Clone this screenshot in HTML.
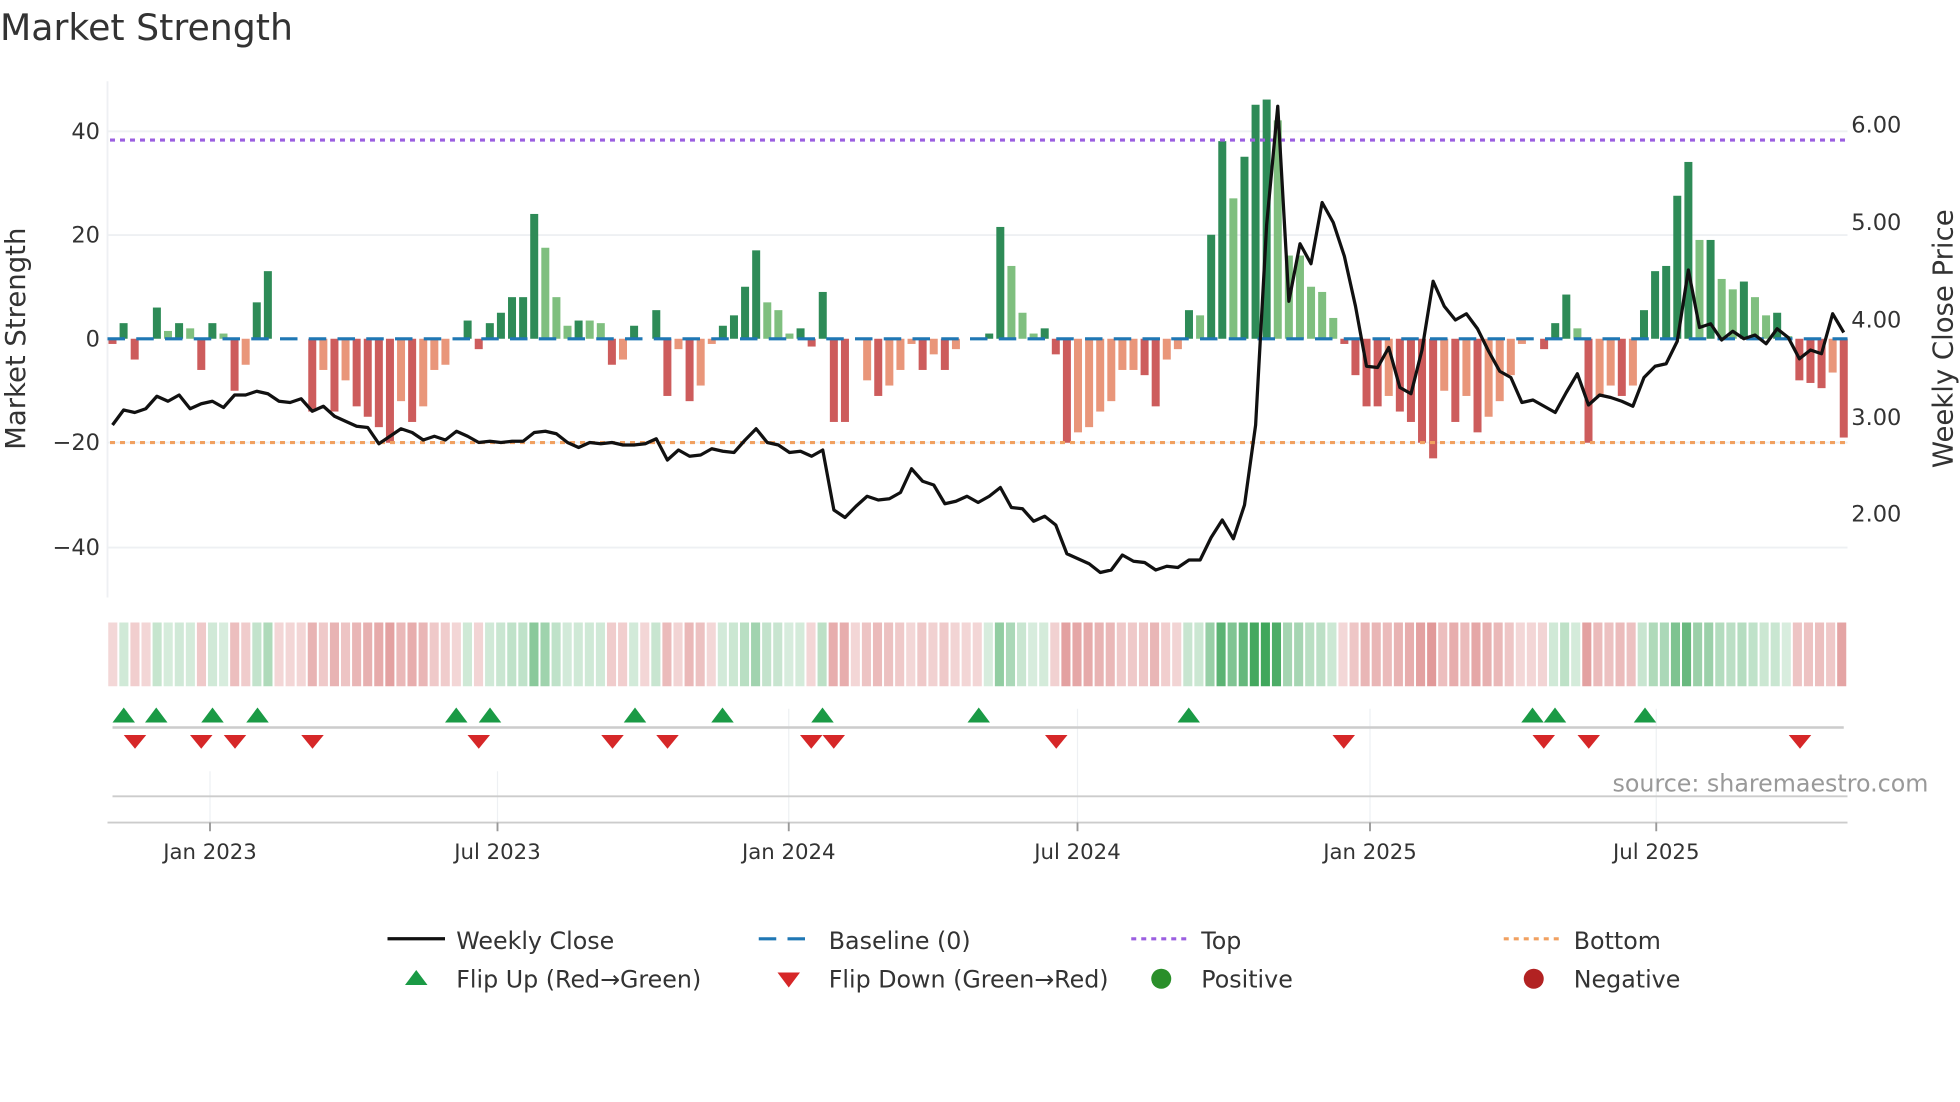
<!DOCTYPE html>
<html><head><meta charset="utf-8"><style>
html,body{margin:0;padding:0;background:#fff;}
svg{display:block;font-family:"DejaVu Sans","Liberation Sans",sans-serif;}
</style></head><body>
<svg id="s" width="1960" height="1102" viewBox="0 0 1568 881.6" xmlns="http://www.w3.org/2000/svg">
<rect width="1568" height="882" fill="#fff"/>
<text x="0" y="32" font-size="29" fill="#333">Market Strength</text>
<g id="grid" stroke="#eef0f3" stroke-width="1.5">
<line x1="86" x2="1478" y1="105" y2="105"/><line x1="86" x2="1478" y1="188" y2="188"/>
<line x1="86" x2="1478" y1="354" y2="354"/><line x1="86" x2="1478" y1="438" y2="438"/>
<line x1="86" x2="86" y1="65" y2="478"/>
</g>
<g font-size="18" fill="#333" text-anchor="end">
<text x="80" y="111">40</text><text x="80" y="194">20</text><text x="80" y="277">0</text>
<text x="80" y="360">−20</text><text x="80" y="444">−40</text>
</g>
<g font-size="18" fill="#333">
<text x="1481" y="106">6.00</text><text x="1481" y="184">5.00</text><text x="1481" y="262">4.00</text>
<text x="1481" y="340">3.00</text><text x="1481" y="417">2.00</text>
</g>
<text transform="translate(20,271) rotate(-90)" font-size="22" fill="#333" text-anchor="middle">Market Strength</text>
<text transform="translate(1562,271) rotate(-90)" font-size="22" fill="#333" text-anchor="middle">Weekly Close Price</text>
<g id="bars"></g>
<line x1="86" x2="1478" y1="271" y2="271" stroke="#1f77b4" stroke-width="2.5" stroke-dasharray="14,9"/>
<line x1="88" x2="1476" y1="112" y2="112" stroke="#9b5fe0" stroke-width="2.5" stroke-dasharray="4,4"/>
<line x1="88" x2="1476" y1="354" y2="354" stroke="#f0a060" stroke-width="2.5" stroke-dasharray="4,4"/>
<polyline id="price" fill="none" stroke="#111" stroke-width="2.6" stroke-linejoin="round"/>
<g id="band"></g>
<g stroke="#eef0f3" stroke-width="1">
<line x1="168" x2="168" y1="617" y2="658"/><line x1="398" x2="398" y1="617" y2="658"/><line x1="631" x2="631" y1="567" y2="658"/>
<line x1="862" x2="862" y1="567" y2="658"/><line x1="1096" x2="1096" y1="567" y2="658"/><line x1="1325" x2="1325" y1="567" y2="658"/>
</g>
<line x1="90" x2="1475" y1="582" y2="582" stroke="#ccc" stroke-width="2"/>
<line x1="90" x2="1478" y1="637" y2="637" stroke="#ccc" stroke-width="1.5"/>
<line x1="86" x2="1478" y1="658" y2="658" stroke="#ccc" stroke-width="1.5"/>
<g stroke="#999" stroke-width="1.5">
<line x1="168" x2="168" y1="658" y2="665"/><line x1="398" x2="398" y1="658" y2="665"/><line x1="631" x2="631" y1="658" y2="665"/>
<line x1="862" x2="862" y1="658" y2="665"/><line x1="1096" x2="1096" y1="658" y2="665"/><line x1="1325" x2="1325" y1="658" y2="665"/>
</g>
<g id="tri"></g>
<text x="1290" y="633" font-size="19" fill="#999">source: sharemaestro.com</text>
<g font-size="17" fill="#333" text-anchor="middle">
<text x="168" y="687">Jan 2023</text><text x="398" y="687">Jul 2023</text><text x="631" y="687">Jan 2024</text>
<text x="862" y="687">Jul 2024</text><text x="1096" y="687">Jan 2025</text><text x="1325" y="687">Jul 2025</text>
</g>
<g font-size="19" fill="#333">
<line x1="310" x2="356" y1="751" y2="751" stroke="#111" stroke-width="2.6"/><text x="365" y="759">Weekly Close</text>
<line x1="607" x2="651" y1="751" y2="751" stroke="#1f77b4" stroke-width="2.5" stroke-dasharray="14,9"/><text x="663" y="759">Baseline (0)</text>
<line x1="905" x2="949" y1="751" y2="751" stroke="#9b5fe0" stroke-width="2.5" stroke-dasharray="4,4"/><text x="961" y="759">Top</text>
<line x1="1203" x2="1247" y1="751" y2="751" stroke="#f0a060" stroke-width="2.5" stroke-dasharray="4,4"/><text x="1259" y="759">Bottom</text>
<polygon points="324,788 342,788 333,776" fill="#1a9a45"/><text x="365" y="790">Flip Up (Red→Green)</text>
<polygon points="622,778 640,778 631,790" fill="#d62728"/><text x="663" y="790">Flip Down (Green→Red)</text>
<circle cx="929" cy="783" r="8" fill="#2a8f2a"/><text x="961" y="790">Positive</text>
<circle cx="1227" cy="783" r="8" fill="#b22222"/><text x="1259" y="790">Negative</text>
</g>
</svg>
<script>
var NS="http://www.w3.org/2000/svg";
function el(p,t,a){var e=document.createElementNS(NS,t);for(var k in a)e.setAttribute(k,a[k]);document.getElementById(p).appendChild(e);}
var v="-1r,3g,-4r,0,6g,1.5l,3g,2l,-6r,3g,1l,-10r,-5o,7g,13g,0,0,0,-14r,-6o,-14r,-8o,-13r,-15r,-17r,-20r,-12o,-16r,-13o,-6o,-5o,0,3.5g,-2r,3g,5g,8g,8g,24g,17.5l,8l,2.5l,3.5g,3.5l,3l,-5r,-4o,2.5g,0,5.5g,-11r,-2o,-12r,-9o,-1o,2.5g,4.5g,10g,17g,7l,5.5l,1l,2g,-1.5r,9g,-16r,-16r,0,-8o,-11r,-9o,-6o,-1o,-6r,-3o,-6r,-2o,0,0,1g,21.5g,14l,5l,1l,2g,-3r,-20r,-18o,-17o,-14o,-12o,-6o,-6o,-7r,-13r,-4o,-2o,5.5g,4.5l,20g,38g,27l,35g,45g,46g,42l,16l,16l,10l,9l,4l,-1r,-7r,-13r,-13r,-11o,-14r,-16r,-20r,-23r,-10o,-16r,-11o,-18r,-15o,-12o,-7o,-1o,0,-2r,3g,8.5g,2l,-20r,-11o,-9o,-11r,-9o,5.5g,13g,14g,27.5g,34g,19l,19g,11.5l,9.5l,11g,8l,4.5l,5g,0.5l,-8r,-8.5r,-9.5r,-6.5o,-19r".split(",");
var col={g:"#2e8b57",l:"#7fbf7f",r:"#cd5c5c",o:"#e9967a"};
var N=v.length,x0=90,x1=1475,dx=(x1-x0)/(N-1);
for(var i=0;i<N;i++){var s=v[i],val=parseFloat(s),c=s.slice(-1);var x=x0+i*dx;
 if(val!==0&&col[c]){var h=Math.abs(val)*4.16;el("bars","rect",{x:x-3.2,y:val>0?271-h:271,width:6.4,height:h,fill:col[c]});}
 var a,f;if(val>=0){a=0.18+Math.min(val,46)/46*0.75;f="rgba(50,160,80,"+a+")";}else{a=0.2+Math.min(-val,23)/23*0.35;f="rgba(200,70,70,"+a+")";}
 if(val===0)f="rgba(200,70,70,0.22)";
 var bw=(1478-86)/N;el("band","rect",{x:86+i*bw+0.6,y:498,width:bw-1.6,height:51,fill:f});}
var p=[340,328,330,327,317,321,316,327,323,321,326,316,316,313,315,321,322,319,329,325,333,337,341,342,355,349,343,346,352,349,352,345,349,354,353,354,353,353,346,345,347,354,358,354,355,354,356,356,355,351,368,360,365,364,359,361,362,352,343,354,356,362,361,365,360,408,414,405,397,400,399,394,375,385,388,403,401,397,402,397,390,406,407,417,413,420,443,447,451,458,456,444,449,450,456,453,454,448,448,430,416,431,404,340,180,85,241,195,211,162,178,205,245,293,294,278,310,315,280,225,245,256,251,263,281,297,302,322,320,325,330,314,299,324,316,318,321,325,302,293,291,273,216,262,259,272,265,271,268,275,263,270,287,280,283,251,266];
var pdx=(x1-x0)/(p.length-1),pts=[];for(var i=0;i<p.length;i++)pts.push((x0+i*pdx).toFixed(1)+","+p[i]);
document.getElementById("price").setAttribute("points",pts.join(" "));
[99,125,170,206,365,392,508,578,658,783,951,1226,1244,1316].forEach(function(x){el("tri","polygon",{points:(x-9)+",578 "+(x+9)+",578 "+x+",566",fill:"#1a9a45"});});
[108,161,188,250,383,490,534,649,667,845,1075,1235,1271,1440].forEach(function(x){el("tri","polygon",{points:(x-9)+",588 "+(x+9)+",588 "+x+",599",fill:"#d62728"});});
</script>
</body></html>
